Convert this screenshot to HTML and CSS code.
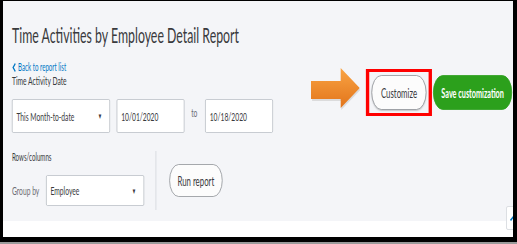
FILE: index.html
```html
<!DOCTYPE html>
<html lang="en">
<head>
    <meta charset="UTF-8">
    <title>Time Activities by Employee Detail Report</title>
    <link rel="stylesheet" href="styles.css">
</head>
<body>

<div class="frame">
    <div class="report">
        <div class="squash">
            <div class="head">
                <div class="head-left">
                    <h1>Time Activities by Employee Detail Report</h1>
                    <a class="back" href="#">
                        <svg width="8" height="9" viewBox="0 0 8 9"><polyline points="6,0.5 2,4.5 6,8.5" fill="none" stroke="#0077c5" stroke-width="1.8"/></svg>
                        Back to report list
                    </a>
                    <div class="field-label">Time Activity Date</div>
                    <div class="date-row">
                        <div class="select period">This Month-to-date <span class="caret">&#9660;</span></div>
                        <div class="input">10/01/2020</div>
                        <span class="to">to</span>
                        <div class="input">10/18/2020</div>
                    </div>
                </div>

                <div class="head-right">
                    <!-- flecha laranja -->
                    <svg class="arrow" width="89" height="42" viewBox="0 0 89 42">
                        <defs>
                            <linearGradient id="orange" x1="0" y1="0" x2="0" y2="1">
                                <stop offset="0" stop-color="#f9a444"/>
                                <stop offset="1" stop-color="#e2741a"/>
                            </linearGradient>
                        </defs>
                        <polygon points="2,15 54,15 54,2 88,22 54,42 54,33 2,33" fill="#c9c9c9" opacity="0.6"/>
                        <polygon points="0,13 53,13 53,0 87,20 53,40 53,31 0,31" fill="url(#orange)"/>
                    </svg>
                    <div class="highlight">
                        <button class="btn customize">Customize</button>
                    </div>
                    <button class="btn btn-green">Save customization</button>
                </div>
            </div>

            <div class="rows">
                <div class="group">
                    <div class="field-label small">Rows/columns</div>
                    <div class="group-row">
                        <span class="group-by">Group by</span>
                        <div class="select group-select">Employee <span class="caret">&#9660;</span></div>
                    </div>
                </div>
                <div class="divider"></div>
                <button class="btn run">Run report</button>
            </div>
        </div>
    </div>

    <!-- botão voltar ao topo -->
    <div class="scroll-top">
        <svg width="8" height="6" viewBox="0 0 8 6"><polyline points="0.5,5.5 4,1 7.5,5.5" fill="none" stroke="#0077c5" stroke-width="1.6"/></svg>
    </div>
</div>
<div class="taskbar"></div>

</body>
</html>
```

FILE: styles.css
```css
body {
    margin: 0;
    height: 244px;
    overflow: hidden;
    background: #000;
    font-family: Lato, "Open Sans", sans-serif;
    color: #393a3d;
}
.frame {
    position: relative;
    margin: 1px 4px 0 3px;
    height: 236px;
    background: #fff;
    overflow: hidden;
}
.report {
    height: 220px;
    background: #f4f5f8;
}
/* a captura original está comprimida na horizontal */
.squash {
    width: 911px;
    box-sizing: border-box;
    padding: 22px 0 0 16px;
    transform: scaleX(0.56);
    transform-origin: 0 0;
}
.head {
    display: flex;
    align-items: flex-start;
}
h1 {
    margin: 0;
    font-size: 22px;
    font-weight: 400;
    line-height: 24px;
    white-space: nowrap;
}
.back {
    display: flex;
    align-items: center;
    gap: 3px;
    margin-top: 13px;
    font-size: 11px;
    line-height: 14px;
    color: #0077c5;
    text-decoration: none;
}
.field-label {
    font-size: 12px;
    line-height: 14px;
}
.field-label.small {
    font-size: 11px;
    margin-top: -1px;
}
.date-row {
    display: flex;
    align-items: center;
    margin-top: 11px;
}
.select, .input {
    display: flex;
    align-items: center;
    box-sizing: border-box;
    height: 34px;
    padding: 0 7px;
    border: 1px solid #babec5;
    border-radius: 2px;
    background: #fff;
    font-size: 12px;
}
.period {
    width: 175px;
    justify-content: space-between;
}
.caret {
    font-size: 8px;
    padding-right: 6px;
}
.input {
    width: 121px;
    margin-left: 12px;
}
.to {
    margin: -8px 2px 0 12px;
    font-size: 12px;
    color: #6b6c72;
}
.head-right {
    display: flex;
    align-items: flex-start;
    margin-left: 68px;
    margin-top: 46px;
}
.arrow {
    margin-top: -1px;
    margin-right: 9px;
}
.highlight {
    border: 3px solid #ff0000;
    border-left-width: 6px;
    border-right-width: 6px;
    padding: 3px 4px;
}
.btn {
    box-sizing: border-box;
    height: 35px;
    padding: 0;
    border: 1px solid #8d9096;
    border-radius: 18px;
    background: #fcfcfc;
    font-family: inherit;
    font-size: 14px;
    color: #393a3d;
    box-shadow: 0 1px 2px rgba(0, 0, 0, 0.2);
}
.customize {
    width: 98px;
}
.btn-green {
    width: 141px;
    margin: 6px 0 0 2px;
    background: #2ca01c;
    border-color: #2ca01c;
    color: #fff;
    font-weight: 700;
    font-size: 13px;
    box-shadow: none;
}
.rows {
    display: flex;
    align-items: flex-start;
    margin-top: 18px;
}
.group-row {
    display: flex;
    align-items: center;
    margin-top: 11px;
}
.group-by {
    margin-right: 12px;
    font-size: 12px;
    color: #6b6c72;
}
.group-select {
    width: 175px;
    height: 31px;
    justify-content: space-between;
}
.divider {
    width: 2px;
    height: 59px;
    margin-left: 20px;
    background: #dcdfe4;
}
.run {
    width: 95px;
    height: 33px;
    margin: 13px 0 0 23px;
    box-shadow: none;
}
.scroll-top {
    position: absolute;
    left: 503px;
    top: 205px;
    width: 16px;
    height: 24px;
    display: flex;
    align-items: center;
    justify-content: center;
    box-sizing: border-box;
    border: 1px solid #dcdfe3;
    border-radius: 2px;
    background: #fff;
}
.taskbar {
    height: 2px;
    margin-top: 5px;
    background: #9a9a9a;
}
```
